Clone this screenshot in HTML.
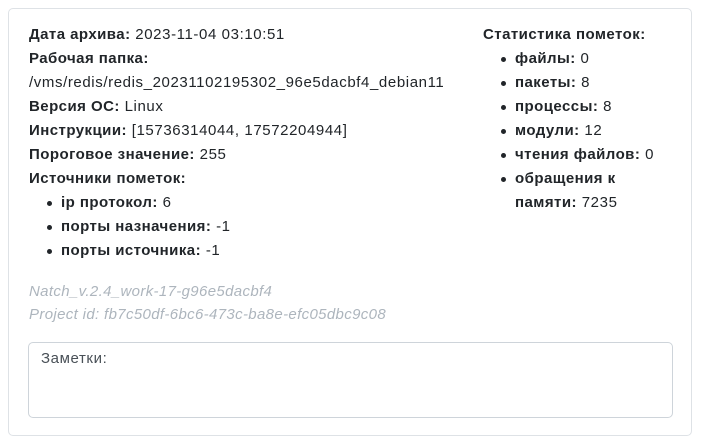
<!DOCTYPE html>
<html><head><meta charset="utf-8"><style>
body{margin:0;width:702px;height:448px;background:#fff;font-family:"Liberation Sans","DejaVu Sans",sans-serif;font-size:15px;letter-spacing:0.6px;color:#212529;position:relative;overflow:hidden}
.card{position:absolute;left:8px;top:8px;width:684px;height:428px;border:1px solid #dee2e6;border-radius:5px;box-sizing:border-box}
.l{position:absolute;white-space:nowrap;line-height:24px}
b{font-weight:bold;letter-spacing:0.45px}
.dot{position:absolute;width:5px;height:5px;border-radius:50%;background:#212529}
.g{color:#adb5bd;font-style:italic;letter-spacing:0.35px}
.ta{position:absolute;left:28px;top:342px;width:645px;height:76px;border:1px solid #ced4da;border-radius:5px;box-sizing:border-box;padding:7px 12px;color:#495057}
</style></head><body>
<div class="card"></div>
<div class="l" style="left:29px;top:23px"><b>Дата архива:</b> 2023-11-04 03:10:51</div>
<div class="l" style="left:29px;top:47px"><b>Рабочая папка:</b></div>
<div class="l" style="left:29px;top:71px">/vms/redis/redis_20231102195302_96e5dacbf4_debian11</div>
<div class="l" style="left:29px;top:95px"><b>Версия ОС:</b> Linux</div>
<div class="l" style="left:29px;top:119px"><b>Инструкции:</b> [15736314044, 17572204944]</div>
<div class="l" style="left:29px;top:143px"><b>Пороговое значение:</b> 255</div>
<div class="l" style="left:29px;top:167px"><b>Источники пометок:</b></div>
<div class="dot" style="left:47px;top:201px"></div><div class="l" style="left:61px;top:191px"><b>ip протокол:</b> 6</div>
<div class="dot" style="left:47px;top:225px"></div><div class="l" style="left:61px;top:215px"><b>порты назначения:</b> -1</div>
<div class="dot" style="left:47px;top:249px"></div><div class="l" style="left:61px;top:239px"><b>порты источника:</b> -1</div>
<div class="l g" style="left:29px;top:280px">Natch_v.2.4_work-17-g96e5dacbf4</div>
<div class="l g" style="left:29px;top:303px">Project id: fb7c50df-6bc6-473c-ba8e-efc05dbc9c08</div>
<div class="l" style="left:483px;top:23px"><b>Статистика пометок:</b></div>
<div class="dot" style="left:501px;top:57px"></div><div class="l" style="left:515px;top:47px"><b>файлы:</b> 0</div>
<div class="dot" style="left:501px;top:81px"></div><div class="l" style="left:515px;top:71px"><b>пакеты:</b> 8</div>
<div class="dot" style="left:501px;top:105px"></div><div class="l" style="left:515px;top:95px"><b>процессы:</b> 8</div>
<div class="dot" style="left:501px;top:129px"></div><div class="l" style="left:515px;top:119px"><b>модули:</b> 12</div>
<div class="dot" style="left:501px;top:153px"></div><div class="l" style="left:515px;top:143px"><b>чтения файлов:</b> 0</div>
<div class="dot" style="left:501px;top:177px"></div><div class="l" style="left:515px;top:167px"><b>обращения к</b></div>
<div class="l" style="left:515px;top:191px"><b>памяти:</b> 7235</div>
<div class="ta">Заметки:</div>
</body></html>
